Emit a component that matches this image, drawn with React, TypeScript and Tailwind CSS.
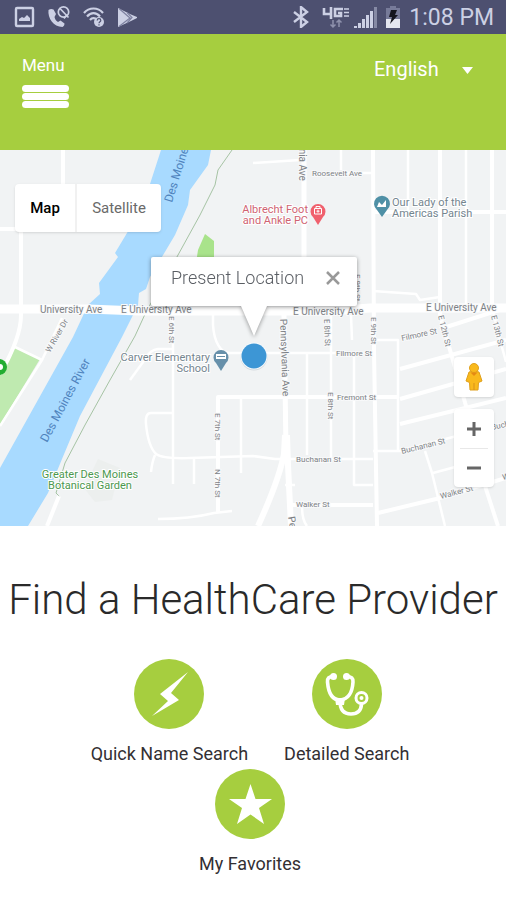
import { useState } from "react";
import type { ReactNode } from "react";

function StatusBar() {
  return (
    <div className="flex h-[34px] items-center justify-between bg-[#4d5070] pl-[14px] pr-3 text-[#ccd0e4]">
      <div className="flex items-center gap-3">
        <svg width="21" height="22" viewBox="0 0 21 22" aria-label="Screenshot saved">
          <rect x="2" y="2" width="17" height="18" rx="1" fill="none" stroke="currentColor" strokeWidth="2.400" />
          <path d="M5 15v-2l3-2 2 1 3-3 3 3v3z" fill="currentColor" />
        </svg>
        <svg width="24" height="24" viewBox="0 0 24 24" aria-label="Wi-Fi calling off">
          <path d="M1.500 5c-1 8 5 17 14 17 1.500-1 2-2 2-3.500l-4-3-2.500 1.500c-2-1-3-3-3.500-5L9 9 6.500 4.500C4.500 3.500 3 4 1.500 5z" fill="currentColor" />
          <circle cx="16.500" cy="7" r="5.200" fill="none" stroke="currentColor" strokeWidth="1.700" />
          <path d="M13 3.500l8.500 9M17 13.500l3-4" stroke="currentColor" strokeWidth="1.700" />
        </svg>
        <svg width="22" height="22" viewBox="0 0 22 22" aria-label="Wi-Fi">
          <g fill="none" stroke="currentColor" strokeWidth="2.200">
            <path d="M1 7c5-6 14-6 19 0" />
            <path d="M4 10.500c4-4.500 9-4.500 13 0" />
            <path d="M7 14c2-2.500 5-2.500 7 0" />
          </g>
          <circle cx="16" cy="16" r="5" fill="currentColor" />
          <path d="M14.200 14.500c0-2.400 3.600-2.400 3.600 0 0 1.300-1.800 1.300-1.800 2.700M16 18.200v1.200" stroke="#4d5070" strokeWidth="1.200" fill="none" />
        </svg>
        <svg width="21" height="21" viewBox="0 0 21 21" aria-label="Play Store">
          <path d="M1 1l13 6.500 6 2.500v1l-6 3L1 20z" fill="currentColor" />
          <path d="M2 1.500l11 9.500L2 19.500M10 5.500l5 5-5 5.500" fill="none" stroke="#7d80a0" strokeWidth="1.200" />
        </svg>
      </div>
      <div className="flex items-center">
        <svg className="mr-3" width="18" height="22" viewBox="0 0 18 22" aria-label="Bluetooth">
          <path d="M2 6l13 10-6 5V1l6 5L2 16" fill="none" stroke="currentColor" strokeWidth="2.400" />
        </svg>
        <svg className="mr-1" width="28" height="24" viewBox="0 0 28 24" aria-label="4G LTE">
          <g fill="none" stroke="currentColor" strokeWidth="2.600">
            <path d="M2 3v6h8M9 2v12M21 4h-8v7h6V8h-3" />
            <path d="M22 4h5M22 7.500h5M22 11h5" strokeWidth="1.500" />
          </g>
          <path d="M11 15v7M8.500 19.500L11 22l2.500-2.500M17 22v-7M14.500 17.500L17 15l2.500 2.500" fill="none" stroke="#8e91ac" strokeWidth="1.500" />
        </svg>
        <svg className="mr-2" width="23" height="22" viewBox="0 0 23 22" aria-label="Signal">
          <path d="M0 20h3v2H0zM4 17h3v5H4zM8 13h3v9H8zM12 9h3v13h-3zM16 5h3v17h-3z" fill="currentColor" />
          <path d="M20 1h3v21h-3z" fill="#868aa5" />
        </svg>
        <svg className="mr-2" width="16" height="22" viewBox="0 0 16 22" aria-label="Battery charging">
          <path d="M5 0h6v2h4v11H1V2h4z" fill="#777b99" />
          <path d="M1 13h14v9H1z" fill="#e4e6f0" />
          <path d="M6 4h6l-2 5h3l-8 9 2-7H4z" fill="#15161f" />
        </svg>
        <span className="mt-0.5 text-[23px] leading-8">1:08 PM</span>
      </div>
    </div>
  );
}

function Header() {
  return (
    <header className="flex h-[116px] items-start justify-between bg-[#a6ce3f] px-[22px] pt-[19px] text-white">
      <button type="button" className="flex flex-col items-start text-[17px] leading-6">
        Menu
        <span aria-hidden="true" className="mt-2 flex w-[47px] flex-col gap-px">
          <span className="h-[7px] rounded-full bg-white" />
          <span className="h-[7px] rounded-full bg-white" />
          <span className="h-[7px] rounded-full bg-white" />
        </span>
      </button>
      <label className="relative">
        <span className="sr-only">Language</span>
        <select defaultValue="English" className="h-8 w-[110px] appearance-none bg-transparent text-xl leading-8 text-white outline-none">
          <option>English</option>
          <option>Español</option>
        </select>
        <svg className="pointer-events-none absolute right-2.5 top-3.5" width="13" height="8" viewBox="0 0 13 8" aria-hidden="true">
          <path d="M1 0h11L6.500 7z" fill="white" />
        </svg>
      </label>
    </header>
  );
}

const thinRoads = [
  "M253 13L300 10",
  "M341 0V20",
  "M338 23H373",
  "M408 0V62",
  "M466 0V157",
  "M373 141L416 144L420 150L440 147",
  "M351 165L352 190",
  "M213 160V175C214 192 221 203 229 203H372",
  "M173 166V334",
  "M173 199H158Q150 200 146 208L130 230",
  "M174 263H151Q145 263 146 274Q148 296 156 304Q163 309 190 308L253 306L275 309H373",
  "M155 305Q152 312 151 322",
  "M194 308V334",
  "M241 247V323",
  "M158 369Q190 369 214 363L232 361",
  "M307 204V305",
  "M331 165V309",
  "M354 204V335H373",
  "M373 190H398V301",
  "M373 301H400L506 273",
  "M433 323L470 313",
  "M425 301L432 323L445 376",
  "M492 157L500 190L506 212",
  "M285 335H295",
  "M302 356Q302 370 307 376",
  "M15 197L42 210L0 276",
  "M62 168L42 210",
];

const mainRoads = [
  "M63 0V35",
  "M0 79H21V165Q21 188 0 224",
  "M373 62H506",
  "M373 0L374 200L377 376",
  "M440 0V165L450 200L466 256L486 339L498 376",
  "M492 0V157",
  "M218 363V247H398",
  "M288 355H373",
  "M400 219L506 190",
  "M400 249L506 219",
  "M400 274L506 248",
  "M378 363L436 349L506 328",
  "M440 179L506 158",
  "M59 346L47 376",
];

function StreetMap() {
  return (
    <svg className="block h-full w-full" viewBox="0 0 506 376" preserveAspectRatio="xMidYMid slice" role="img" aria-label="Street map of Des Moines">
      <rect width="506" height="376" fill="#f1f3f4" />
      <path d="M15 197L40 209L0 275V224z" fill="#bfeab0" />
      <path d="M205 84L214 91V120H195L198 100z" fill="#a9e38b" />
      <path d="M98 309L120 318L112 350L95 352L84 338z" fill="#ecefee" />
      <path
        d="M161 0L150 34L140 60L127 83L115 103L118 107L99 133L100 144L88 155L73 187L0 318V376H28L48 343L62 309L80 266L122 187L138 155L139 143L146 139L150 127L175 85L188 55L190 40L208 15L211 0z"
        fill="#a8daff"
      />
      <path d="M232 0L218 20L215 35L200 65L178 105L146 162L135 186L110 230L85 275L65 313L56 343L60 347" fill="none" stroke="#a6c3a4" strokeWidth="1" />
      <g fill="none" stroke="#ffffff" strokeLinejoin="round">
        {thinRoads.map((d) => (
          <path key={d} d={d} strokeWidth="2.500" />
        ))}
        {mainRoads.map((d) => (
          <path key={d} d={d} strokeWidth="4" />
        ))}
        <path d="M304 0V165" strokeWidth="5" />
        <path d="M284 165L286 300" strokeWidth="5" />
        <path d="M285 285L284 304Q279 330 258 376M287 285L288 315L291 376" strokeWidth="6" />
        <path d="M0 159H88L139 161H330L370 158H506" strokeWidth="9" />
      </g>

      <g fontFamily="Roboto, sans-serif" fontSize="9" fill="#7d8185" stroke="#f8f9fa" strokeWidth="2" paintOrder="stroke">
        <text x="40" y="163" fontSize="10">University Ave</text>
        <text x="121" y="163" fontSize="10">E University Ave</text>
        <text x="293" y="165" fontSize="10">E University Ave</text>
        <text x="426" y="161" fontSize="10">E University Ave</text>
        <text x="312" y="26" fontSize="8">Roosevelt Ave</text>
        <text x="336" y="206" fontSize="8">Filmore St</text>
        <text x="337" y="250" fontSize="8">Fremont St</text>
        <text x="296" y="312" fontSize="8">Buchanan St</text>
        <text x="296" y="357" fontSize="8">Walker St</text>
        <text transform="translate(402 191) rotate(-12)" fontSize="8">Filmore St</text>
        <text transform="translate(402 304) rotate(-14)" fontSize="8">Buchanan St</text>
        <text transform="translate(441 349) rotate(-15)" fontSize="8">Walker St</text>
        <text transform="translate(492 280) rotate(-13)" fontSize="8">Buchanan St</text>
        <text transform="translate(503 330) rotate(-13)" fontSize="8">Walker St</text>
        <text transform="translate(299 -14) rotate(90)" fontSize="10">lvania Ave</text>
        <text transform="translate(280 169) rotate(88)" fontSize="10">Pennsylvania Ave</text>
        <text transform="translate(169 166) rotate(90)" fontSize="8">E 6th St</text>
        <text transform="translate(215 263) rotate(90)" fontSize="8">E 7th St</text>
        <text transform="translate(215 319) rotate(90)" fontSize="8">N 7th St</text>
        <text transform="translate(324 169) rotate(88)" fontSize="8">E 8th St</text>
        <text transform="translate(328 242) rotate(90)" fontSize="8">E 8th St</text>
        <text transform="translate(355 124) rotate(90)" fontSize="8">E 9th St</text>
        <text transform="translate(371 167) rotate(90)" fontSize="8">E 9th St</text>
        <text transform="translate(438 166) rotate(76)" fontSize="8">E 12th St</text>
        <text transform="translate(491 166) rotate(76)" fontSize="8">E 13th St</text>
        <text transform="translate(50 203) rotate(-60)" fontSize="8">W River Dr</text>
        <text transform="translate(288 367) rotate(80)" fontSize="10">Pennsylvania</text>
      </g>
      <g fontFamily="Roboto, sans-serif" fontSize="12" fill="#4f83bd">
        <text transform="translate(47 293) rotate(-62)">Des Moines River</text>
        <text transform="translate(172 53) rotate(-73)">Des Moines River</text>
      </g>
      <g fontFamily="Roboto, sans-serif" fontSize="11" stroke="#ffffff" strokeWidth="2" paintOrder="stroke">
        <g fill="#cf6372" textAnchor="end">
          <text x="308" y="63">Albrecht Foot</text>
          <text x="308" y="74">and Ankle PC</text>
        </g>
        <g fill="#74858f">
          <text x="392" y="56">Our Lady of the</text>
          <text x="392" y="67">Americas Parish</text>
          <g textAnchor="end">
            <text x="210" y="211">Carver Elementary</text>
            <text x="210" y="222">School</text>
          </g>
        </g>
        <g fill="#4c984e" textAnchor="middle">
          <text x="90" y="328">Greater Des Moines</text>
          <text x="90" y="339">Botanical Garden</text>
        </g>
      </g>

      <g>
        <path d="M318 75l-5-8a7.500 7.500 0 1 1 10 0z" fill="#f0606d" />
        <path d="M314.500 58.500h7v5.500h-7zM316 58v-1.500h4V58" fill="none" stroke="#fff" />
        <path d="M316.500 61.200h3M318 59.700v3" stroke="#fff" />
        <path d="M382 67l-5-7a8 8 0 1 1 10 0z" fill="#4f90a6" />
        <path d="M377 57l2-5 3 3 4-5v7z" fill="#fff" />
        <path d="M221 221l-5-8a7.500 7.500 0 1 1 10 0z" fill="#6790aa" />
        <path d="M216 204h10v5h-10z" fill="#fff" />
        <path d="M217 206.500h8" stroke="#6790aa" />
        <circle cx="-1" cy="217" r="8" fill="#22ad31" />
        <circle cx="0" cy="217" r="3" fill="#fff" />
      </g>
    </svg>
  );
}

function Pegman() {
  return (
    <svg width="18" height="28" viewBox="0 0 18 28" aria-hidden="true">
      <path d="M4 9Q9 7 14 9L17 18L13.500 19.500L13 27H5L4.500 19.500L1 18z" fill="#f9b91c" stroke="#e0a01c" />
      <circle cx="9" cy="5" r="4.500" fill="#f9b91c" stroke="#e0a01c" />
      <path d="M5.500 9.500L9 13l3.500-3.500z" fill="#e58a13" />
      <path d="M9 20v7" stroke="#d9911a" />
    </svg>
  );
}

function MapPanel() {
  const [popupOpen, setPopupOpen] = useState(true);
  return (
    <section aria-label="Map" className="relative h-[376px] overflow-hidden">
      <StreetMap />

      <div className="absolute left-[15px] top-[34px] flex h-12 overflow-hidden rounded-sm bg-white text-[15px] shadow">
        <button type="button" className="w-[62px] border-r-2 border-[#f1f1f1] font-medium text-black">Map</button>
        <button type="button" className="w-[84px] text-[#6a6a6a]">Satellite</button>
      </div>

      <svg className="absolute left-1/2 top-[192px] -ml-[13px]" width="28" height="30" viewBox="0 0 28 30" aria-label="Present location">
        <circle cx="14" cy="15" r="13.500" fill="#d5dade" />
        <circle cx="14" cy="14" r="13.500" fill="#f5f9fc" />
        <circle cx="14" cy="14" r="12.500" fill="#3d96d5" />
      </svg>

      {popupOpen && (
        <div className="absolute left-1/2 top-[107px] -ml-[102px] w-[206px] drop-shadow-[0_1px_2px_rgba(0,0,0,0.4)]">
          <div className="flex h-[49px] items-center justify-between rounded-[2px] bg-white pb-[7px] pl-5 pr-4 text-lg text-[#5a5e64]">
            <span className="font-light">Present Location</span>
            <button type="button" aria-label="Close" onClick={() => setPopupOpen(false)}>
              <svg width="16" height="16" viewBox="0 0 16 16" aria-hidden="true">
                <path d="M2 2l12 12M14 2L2 14" stroke="#999999" strokeWidth="2.500" />
              </svg>
            </button>
          </div>
          <svg className="mx-auto block" width="26" height="30" viewBox="0 0 26 30" aria-hidden="true">
            <path d="M0 0h26L13 30z" fill="white" />
          </svg>
        </div>
      )}

      <div className="absolute right-3 top-[207px] flex w-10 flex-col gap-3">
        <button type="button" aria-label="Street View" className="flex h-10 items-center justify-center rounded-sm bg-white shadow">
          <Pegman />
        </button>
        <div className="flex flex-col items-center rounded-sm bg-white shadow">
          <button type="button" aria-label="Zoom in" className="flex h-[39px] w-full items-center justify-center">
            <svg width="16" height="16" viewBox="0 0 16 16" aria-hidden="true">
              <path d="M8 1v14M1 8h14" stroke="#666" strokeWidth="3" />
            </svg>
          </button>
          <span className="h-px w-7 bg-[#e8e8e8]" />
          <button type="button" aria-label="Zoom out" className="flex h-[38px] w-full items-center justify-center">
            <svg width="16" height="16" viewBox="0 0 16 16" aria-hidden="true">
              <path d="M1 8h14" stroke="#666" strokeWidth="3" />
            </svg>
          </button>
        </div>
      </div>
    </section>
  );
}

function Action({ label, children }: { label: string; children: ReactNode }) {
  return (
    <button type="button" className="flex flex-col items-center text-lg leading-6 text-[#332f33]">
      <svg className="mb-[13px]" width="70" height="70" viewBox="0 0 70 70" aria-hidden="true">
        <circle cx="35" cy="35" r="35" fill="#a6ce3f" />
        {children}
      </svg>
      {label}
    </button>
  );
}

export default function App() {
  return (
    <div className="min-h-screen bg-white font-['Roboto',sans-serif]">
      <StatusBar />
      <Header />
      <MapPanel />
      <main className="pt-12">
        <h1 className="whitespace-nowrap text-center text-[42px] font-light leading-[52px] text-[#2a2a2a]">
          Find a HealthCare Provider
        </h1>
        <div className="mt-[33px] flex flex-wrap justify-center gap-x-9 gap-y-[3px] pl-7 pr-[34px]">
          <Action label="Quick Name Search">
            <path d="M54 13L26 35L34 42L18 57L45 41L37 34z" fill="white" />
          </Action>
          <Action label="Detailed Search">
            <g fill="none" stroke="white" strokeWidth="3.600" strokeLinecap="round" strokeLinejoin="round">
              <path d="M21 17.500Q15 17.500 15.500 23Q17 41 28 41Q40 40 41 23Q41.500 17.500 35 17.500" />
              <path d="M28 42Q28 55 39 55Q49 55 49.500 45" />
              <circle cx="49.500" cy="39" r="5.500" strokeWidth="3" />
            </g>
            <circle cx="21.500" cy="17.500" r="3.500" fill="white" />
            <circle cx="34.500" cy="17.500" r="3.500" fill="white" />
            <path d="M23 39h10l-1 7h-8z" fill="white" />
            <circle cx="49.500" cy="39" r="2" fill="white" />
          </Action>
          <Action label="My Favorites">
            <path d="M35.500 15L40.500 30H57L44 39L49 55L35.500 45.500L22 55L27 39L14 30H30.500z" fill="white" />
          </Action>
        </div>
      </main>
    </div>
  );
}
